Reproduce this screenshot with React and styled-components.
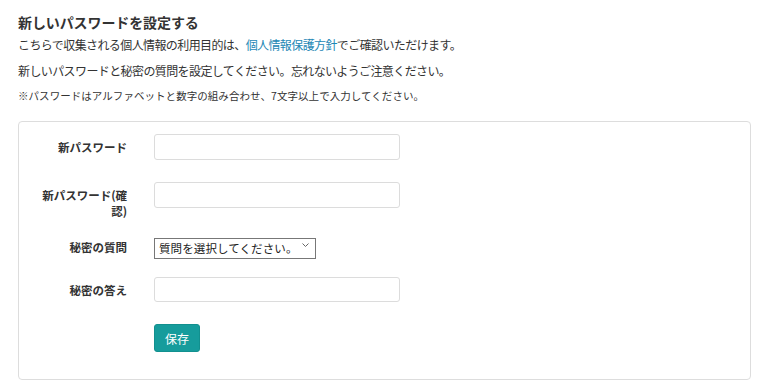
import React from "react";
import styled, { createGlobalStyle } from "styled-components";

const Global = createGlobalStyle`
  body { margin:0; background:#fff; font-family:"Noto Sans CJK JP","Noto Sans",sans-serif; color:#333; }
`;

const Page = styled.div`
  padding:12px 9px 0 18px;
`;

const Title = styled.h1`
  margin:0;
  font-size:14px;
  line-height:20px;
  font-weight:700;
  color:#333;
  letter-spacing:-0.1px;
`;

const Text = styled.p`
  margin:${p => p.mt}px 0 0;
  font-size:${p => p.small ? 10.5 : 12}px;
  line-height:16px;
  letter-spacing:${p => p.small ? 0.05 : -0.6}px;
  color:#333;
`;

const Link = styled.a`
  color:#1d87b5;
  text-decoration:none;
`;

const Card = styled.div`
  margin-top:17px;
  border:1px solid #ddd;
  border-radius:4px;
  padding:12px 0 27px;
`;

const Form = styled.div`
  display:grid;
  grid-template-columns:108px 246px;
  grid-template-rows:26px 30px 21px 25px 28px;
  row-gap:22px;
  column-gap:27px;
`;

const Label = styled.label`
  padding:5px 0 0 20px;
  font-size:11.5px;
  line-height:16px;
  font-weight:700;
  text-align:right;
  letter-spacing:0;
  color:#333;
`;

const Input = styled.input`
  box-sizing:border-box;
  width:246px;
  height:${p => p.h || 26}px;
  border:1px solid #dcdcdc;
  border-radius:3px;
  padding:0 8px;
  font-size:12px;
  outline:none;
`;

const SelectWrap = styled.div`
  position:relative;
  width:162px;
  height:21px;
`;

const Select = styled.select`
  appearance:none;
  box-sizing:border-box;
  width:162px;
  height:21px;
  border:1px solid #777;
  border-radius:0;
  background:#fff;
  padding:0 0 0 4px;
  font-family:"Noto Sans CJK JP",sans-serif;
  font-size:11.5px;
  letter-spacing:0.1px;
  color:#222;
`;

const Chevron = styled.svg`
  position:absolute;
  right:7px;
  top:9px;
  pointer-events:none;
`;

const Button = styled.button`
  width:46px;
  height:28px;
  background:#169c9c;
  border:1px solid #12908f;
  border-radius:3px;
  color:#fff;
  font-family:"Noto Sans CJK JP",sans-serif;
  font-size:12px;
  padding:0;
  cursor:pointer;
`;

const Empty = styled.div``;

export default function App() {
  return (
    <Page>
      <Global />
      <Title>新しいパスワードを設定する</Title>
      <Text mt={5}>
        こちらで収集される個人情報の利用目的は、<Link href="#">個人情報保護方針</Link>でご確認いただけます。
      </Text>
      <Text mt={10}>新しいパスワードと秘密の質問を設定してください。忘れないようご注意ください。</Text>
      <Text mt={9} small>※パスワードはアルファベットと数字の組み合わせ、7文字以上で入力してください。</Text>
      <Card>
        <Form>
          <Label>新パスワード</Label>
          <Input type="password" />
          <Label>新パスワード(確認)</Label>
          <Input type="password" />
          <Label>秘密の質問</Label>
          <SelectWrap>
            <Select defaultValue="">
              <option value="">質問を選択してください。</option>
            </Select>
            <Chevron width="7" height="4" viewBox="0 0 7 4">
              <path d="M0.5 0.5 L3.5 3.5 L6.5 0.5" fill="none" stroke="#666" strokeWidth="1" />
            </Chevron>
          </SelectWrap>
          <Label>秘密の答え</Label>
          <Input h={25} type="text" />
          <Empty />
          <Button>保存</Button>
        </Form>
      </Card>
    </Page>
  );
}
